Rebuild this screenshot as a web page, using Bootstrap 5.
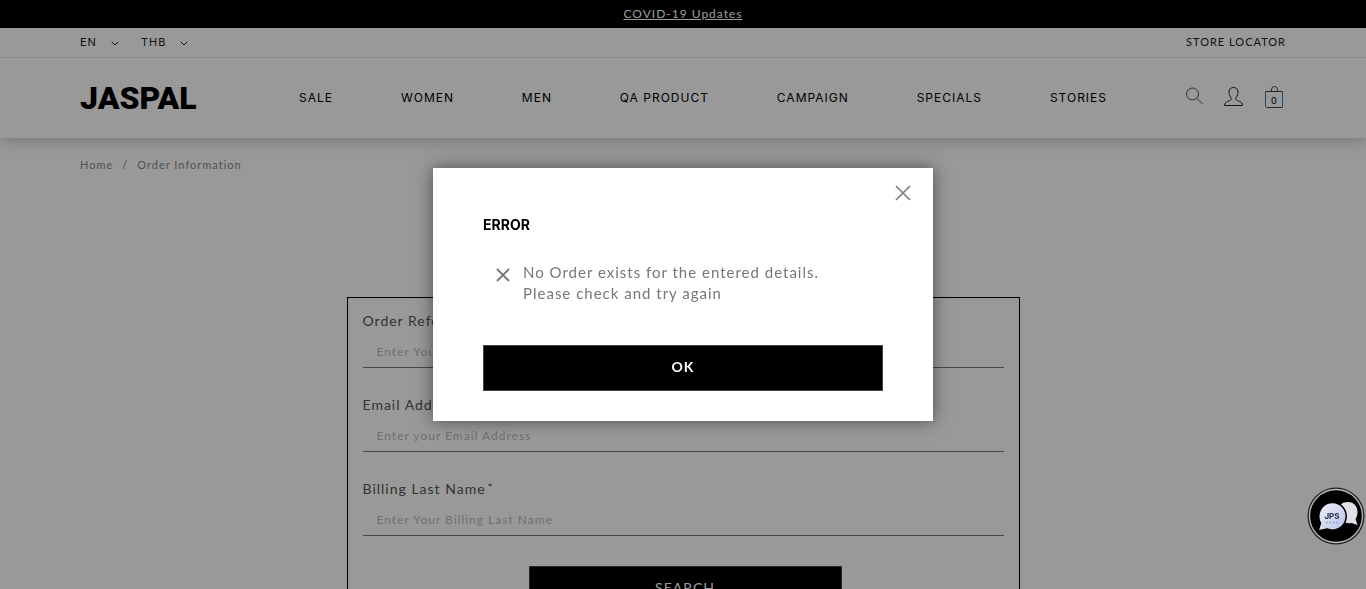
<!DOCTYPE html>
<html lang="en">
<head>
<meta charset="utf-8">
<meta name="viewport" content="width=device-width, initial-scale=1">
<title>Order Information | JASPAL</title>
<link href="https://cdn.jsdelivr.net/npm/bootstrap@5.3.0/dist/css/bootstrap.min.css" rel="stylesheet">
<style>
  body { font-family: Lato, "Open Sans", sans-serif; font-size: 14px; line-height: 21px; letter-spacing: 1px; color: #555; }
  a { color: inherit; }
  .page-pad { padding-left: 80px; padding-right: 80px; }
  .promo { font-size: 12px; line-height: 28px; }
  .utility { font-size: 11px; line-height: 28px; padding-bottom: 1px; border-bottom: 1px solid #e6e6e6; color: #222; z-index: 1; }
  .utility .btn { font-family: Inter, sans-serif; font-size: 11px; line-height: 28px; letter-spacing: 1px; color: #222; gap: 14px; }
  .utility .btn svg { margin-top: 2px; }
  .utility .currency { margin-left: 22px; }
  .main-head { min-height: 80px; box-shadow: 0 2px 16px rgba(0,0,0,.25); }
  .logo { font: 900 32px/40px Roboto, sans-serif; letter-spacing: 0; color: #000; width: 219px; }
  .menu { font-family: Inter, sans-serif; font-size: 12px; color: #000; padding-bottom: 2px; }
  .tools { width: 179px; padding-right: 2px; padding-bottom: 2px; gap: 20px; }
  .tools a { position: relative; }
  .bag-count { position: absolute; left: 0; right: 0; top: 5px; text-align: center; font: 500 9px/20px Inter, sans-serif; letter-spacing: 0; }
  .crumbs { font-size: 11px; line-height: 20px; padding-top: 17px; --bs-breadcrumb-item-padding-x: 9px; --bs-breadcrumb-divider-color: #888; margin-bottom: 122px; color: #888; }
  .order-form { max-width: 673px; border: 1px solid #000; padding: 12px 15px 40px; }
  .order-form label { margin-bottom: 5px; }
  .star { font-size: 12px; vertical-align: 2px; line-height: 1; margin-left: 2px; }
  .line-input { height: 32px; border: 0; border-bottom: 1px solid #777; border-radius: 0; padding: 0 14px; font-size: 12px; letter-spacing: 1px; }
  .line-input::placeholder { color: #bbb; }
  .field { margin-bottom: 26px; }
  .btn-block-dark { height: 46px; background: #000; color: #fff; border: 1px solid #444; border-radius: 0; font-size: 14px; letter-spacing: 1px; padding: 0 12px 3px; }
  .search-btn { width: 313px; margin-top: 30px; }
  .modal-backdrop { --bs-backdrop-opacity: .4; }
  .error-box { border: 0; border-radius: 0; padding: 47px 50px 30px; box-shadow: 0 0 16px rgba(0,0,0,.5); color: #777; }
  .error-box h2 { font: 700 14px/20px Inter, sans-serif; letter-spacing: 0; color: #000; margin-bottom: 27px; }
  .error-msg { font-size: 15px; margin-bottom: 41px; padding-left: 13px; gap: 13px; }
  .error-msg svg { margin-top: 5px; }
  .close-x { position: absolute; top: 17px; right: 22px; line-height: 0; }
  .ok-btn { font-weight: 700; }
  .chat { position: fixed; right: 1px; bottom: 44px; z-index: 1060; }
</style>
</head>
<body class="modal-open overflow-hidden">
<div class="promo bg-black text-white text-center position-relative z-1"><a href="#">COVID-19 Updates</a></div>
<header>
  <div class="utility page-pad d-flex position-relative bg-white">
    <button class="btn p-0 border-0 d-flex align-items-center" type="button">EN
      <svg width="8" height="5" viewBox="0 0 8 5" fill="none" stroke="currentColor"><path d="M.7.8 4 4 7.300.8"/></svg></button>
    <button class="btn p-0 border-0 d-flex align-items-center currency" type="button">THB
      <svg width="8" height="5" viewBox="0 0 8 5" fill="none" stroke="currentColor"><path d="M.7.8 4 4 7.300.8"/></svg></button>
    <a class="ms-auto text-decoration-none" href="#">STORE LOCATOR</a>
  </div>
  <div class="main-head page-pad d-flex align-items-center">
    <a class="logo text-decoration-none flex-shrink-0" href="#">JASPAL</a>
    <nav class="menu nav flex-grow-1 justify-content-between">
      <a class="text-decoration-none" href="#">SALE</a>
      <a class="text-decoration-none" href="#">WOMEN</a>
      <a class="text-decoration-none" href="#">MEN</a>
      <a class="text-decoration-none" href="#">QA PRODUCT</a>
      <a class="text-decoration-none" href="#">CAMPAIGN</a>
      <a class="text-decoration-none" href="#">SPECIALS</a>
      <a class="text-decoration-none" href="#">STORIES</a>
    </nav>
    <div class="tools d-flex justify-content-end align-items-center flex-shrink-0 text-dark">
      <a href="#" aria-label="Search"><svg class="d-block" width="18" height="22" viewBox="0 0 18 22" fill="none" stroke="#555"><circle cx="6.500" cy="8" r="6"/><path d="m10.800 12.300 5.700 5.700"/></svg></a>
      <a href="#" aria-label="Account"><svg class="d-block" width="20" height="22" viewBox="0 0 20 22" fill="none" stroke="#222"><path d="M7 13.500c.5-.8.200-1.500-.3-2.300C5.500 9.500 5 8 5 6c0-3 2-4.500 4.500-4.500S14 3 14 6c0 2-.5 3.500-1.700 5.200-.5.800-.8 1.500-.3 2.300 1 1.800 6.500 1.500 6.500 6H.5c0-4.500 5.500-4.200 6.500-6z"/></svg></a>
      <a class="text-decoration-none" href="#" aria-label="Bag"><svg class="d-block" width="20" height="22" viewBox="0 0 20 22" fill="none"><path stroke="#444" d="M1.500 5.500h17M7.500 5.500V4a2.500 3 0 0 1 6 0v1.500M2.500 21.500h16"/><path stroke="#3d78a8" d="M1.500 5.500v15l1 1M18.500 5.500v16"/></svg><span class="bag-count">0</span></a>
    </div>
  </div>
</header>
<main class="page-pad">
  <nav aria-label="breadcrumb">
    <ol class="breadcrumb crumbs">
      <li class="breadcrumb-item"><a class="text-decoration-none" href="#">Home</a></li>
      <li class="breadcrumb-item">Order Information</li>
    </ol>
  </nav>
  <form class="order-form mx-auto">
    <div class="field"><label class="d-block" for="ref">Order Reference Number<span class="star">*</span></label><input class="form-control line-input bg-transparent" id="ref" placeholder="Enter Your Order Reference Number"></div>
    <div class="field"><label class="d-block" for="mail">Email Address<span class="star">*</span></label><input class="form-control line-input bg-transparent" id="mail" type="email" placeholder="Enter your Email Address"></div>
    <div class="field"><label class="d-block" for="last">Billing Last Name<span class="star">*</span></label><input class="form-control line-input bg-transparent" id="last" placeholder="Enter Your Billing Last Name"></div>
    <div class="ps-1"><button class="btn btn-block-dark search-btn d-block mx-auto" type="button">SEARCH</button></div>
  </form>
</main>

<div class="modal-backdrop show"></div>
<div class="modal show d-block" tabindex="-1" role="dialog" aria-labelledby="err">
  <div class="modal-dialog modal-dialog-centered">
    <div class="modal-content error-box">
      <button class="btn p-0 border-0 close-x" type="button" aria-label="Close"><svg width="16" height="16" viewBox="0 0 16 16" stroke="#808080" stroke-width="1.700"><path d="m1 1 14 14M15 1 1 15"/></svg></button>
      <h2 id="err">ERROR</h2>
      <div class="error-msg d-flex align-items-start">
        <svg class="flex-shrink-0" width="14" height="16" viewBox="0 0 14 16" stroke="#777" stroke-width="1.800"><path d="m1 2 12 12M13 2 1 14"/></svg>
        <p class="mb-0">No Order exists for the entered details.<br>Please check and try again</p>
      </div>
      <button class="btn btn-block-dark ok-btn w-100" type="button">OK</button>
    </div>
  </div>
</div>

<button class="chat btn p-0 border-0 rounded-circle lh-1" type="button" aria-label="Chat">
  <svg class="d-block" width="58" height="58" viewBox="0 0 58 58">
    <defs><linearGradient id="bub" x1="0" y1="0" x2="1" y2="1"><stop offset="0" stop-color="#f1eff6"/><stop offset="1" stop-color="#b4c4ea"/></linearGradient></defs>
    <circle cx="29" cy="29" r="28.500" fill="#222"/><circle cx="29" cy="29" r="26.500" fill="#000" stroke="#bbb" stroke-width="1.300"/>
    <path d="M41 15c6 0 9.500 4.500 9.500 10 0 3-1 5.500-2 7l2 6-6-2c-8 1.500-13-4-13-11S35 15 41 15z" fill="#e2dfe8"/>
    <path d="M25 15.500a13.800 13.800 0 1 1-5 26.500l-9 2 2.500-8A13.800 13.800 0 0 1 25 15.500z" fill="url(#bub)" stroke="#000" stroke-width="1.500"/>
    <text x="25" y="32" text-anchor="middle" font-family="Inter, sans-serif" font-size="8" font-weight="700" letter-spacing="0" fill="#2b2a55">JPS</text>
    <path d="M19 35.500h12" stroke="#8d93b5" stroke-width="1.500" stroke-dasharray="1.500 2"/>
  </svg>
</button>
<script src="https://cdn.jsdelivr.net/npm/bootstrap@5.3.0/dist/js/bootstrap.bundle.min.js"></script>
</body>
</html>
